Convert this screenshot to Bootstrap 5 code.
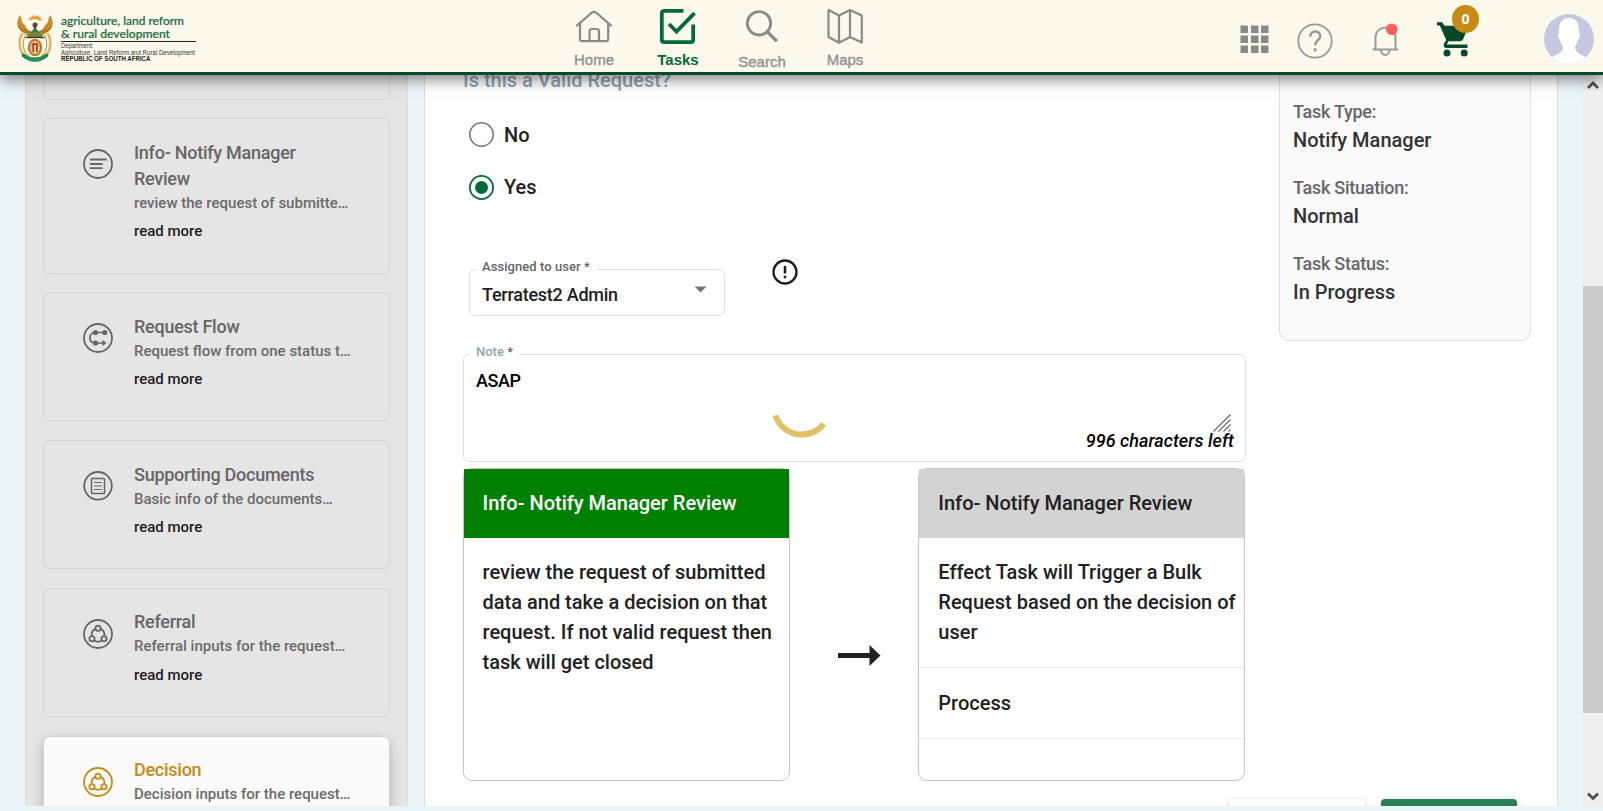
<!DOCTYPE html>
<html lang="en">
<head>
<meta charset="utf-8">
<meta name="viewport" content="width=device-width, initial-scale=1">
<title>Tasks</title>
<link href="https://cdn.jsdelivr.net/npm/bootstrap@5.3.0/dist/css/bootstrap.min.css" rel="stylesheet">
<script src="https://cdn.jsdelivr.net/npm/bootstrap@5.3.0/dist/js/bootstrap.bundle.min.js"></script>
<style>
body{font-family:Roboto,sans-serif;font-weight:500;color:#212121;background:#ebf4f8;height:811px;overflow:hidden}
svg{display:block;flex:none}
.topbar{height:75px;background:#fbf9eb;border-bottom:3px solid #044c29;box-shadow:0 4px 14px rgba(0,0,0,.5);z-index:5;padding-left:16px}
.brand-box{width:536px}
.nav-tab{font-family:"Liberation Sans",sans-serif;font-size:15px;line-height:18px;color:#929292;font-weight:400;-webkit-text-stroke:.4px #929292;width:84px;padding-top:8px}
.nav-tab.on{color:#036b38;font-weight:700;-webkit-text-stroke:0;font-size:15px}
.tools{margin-left:auto;width:363px}
.count{left:16px;top:-17px;width:27px;height:28px;background:#c58b14;color:#fff;font:700 14px/27px "Open Sans",sans-serif}
.stage{height:731px;padding-left:25px}
.side{width:383px;background:#e5e5e5;border:solid #e0e0e0;border-width:0 2px;padding:0 16px;margin-right:16px}
.step{border:1px solid #d2d2d2;border-radius:7px;height:129px;margin-bottom:19px;padding:21px 20px 0 39px;gap:21px;flex:none}
.step.cut{height:25px;border-top:0;border-radius:0 0 7px 7px;margin-bottom:18px}
.step.tall{height:156px;margin-bottom:18px}
.step.up{padding-top:20px}
.step.on{background:#fafafa;box-shadow:0 4px 12px rgba(0,0,0,.22);color:#c58b14}
.step>svg{margin-top:9px;color:#666}
.step.up>svg{margin-top:10px}
.step.on>svg{color:#c58b14}
.step h6{font-size:18px;line-height:26px;margin:0;color:#666;font-weight:500;letter-spacing:-.26px}
.step.on h6{color:#c58b14}
.step p{font-size:15px;line-height:22px;margin:0 0 6px;color:#6b6b6b;white-space:nowrap}
.step a{font-size:15px;line-height:22px;color:#212121;text-decoration:none;display:block}
.page{width:1134px;background:#fff;border:solid #d9dde0;border-width:0 1px;margin-right:25px}
.form-col{width:783px;margin-left:38px;margin-right:33px}
.question{margin-top:-7px;font-size:20px;line-height:24px;color:#90a4ae}
.choice{height:25px;font-size:20px;line-height:25px;gap:10px;padding-left:6px}
.outlined{border:1px solid #e0e0e0;border-radius:6px}
.legend-tag{font-size:13px;line-height:16px;background:#fff;padding:0 6px;top:-11px;color:#666;white-space:nowrap}
.user{width:256px;height:47px;padding:8px 17px 0 12px;font-size:18px;line-height:24px}
.note{height:108px;margin-top:38px;font-size:18px;color:#000}
.flow-box{width:327px;border:1px solid #c4c4c4;border-radius:9px;font-size:20px;line-height:30px}
.flow-box header{height:69px;padding:19px 18px 0 18.5px}
.flow-box section{padding:19px 6px 0 18.5px}
.flow-box .rule{border-bottom:1px solid #ebebeb}
.flow-box.next header,.flow-box.next section{padding-left:19.3px}
.flow-box.next section{padding-right:5px}
.info{width:252px;height:266px;background:#fafafa;border:1px solid #e0e0e0;border-top:0;border-radius:0 0 10px 10px;padding:24px 13px}
.info dt{font-size:18px;line-height:25px;font-weight:500;color:#666;letter-spacing:-.26px}
.info dd{font-size:20px;line-height:30px;margin:1px 0 20px;color:#333}
.act{width:136px;height:42px;border-radius:4px;box-shadow:0 1px 5px rgba(0,0,0,.22)}
.rail{width:20px;background:#efefef;padding-top:5px}
.thumb{height:427px;background:#cbcbcb}
.loader{left:770px;top:375px}
</style>
</head>
<body class="d-flex flex-column">
<svg width="0" height="0" class="position-absolute">
  <symbol id="share" viewBox="0 0 30 30"><g fill="none" stroke="currentColor" stroke-width="1.8"><circle cx="15" cy="15" r="14"/><circle cx="15" cy="9.300" r="2.600"/><circle cx="9" cy="19.700" r="2.600"/><circle cx="21" cy="19.700" r="2.600"/><path d="M12.400 9.800C9.500 11 8.300 13.500 8.500 16.800M17.600 9.800C20.500 11 21.700 13.500 21.500 16.800M11.200 21.600C13.500 23.100 16.500 23.100 18.800 21.600"/></g></symbol>
</svg>
<header class="topbar d-flex position-relative flex-shrink-0">
  <div class="brand-box">
    <svg width="184" height="66" viewBox="16 0 184 66">
      <g fill="none" stroke-linecap="round">
        <path d="M22 34C17 42 20 56 29 59M48 34C53 42 50 56 41 59" stroke="#d9b96a" stroke-width="2.600"/>
        <path d="M25.500 35C21.500 43 23 52 28.500 56M44.500 35C48.500 43 47 52 41.500 56" stroke="#c6a04a" stroke-width="1.200"/>
      </g>
      <path d="M30 20.500L27.800 18.500L30.600 18.700L29.600 16L32 17.400L32.600 14.800L34.200 17L35.400 14.600L36.500 17L38.600 15L38.700 17.600L41.200 16.500L40 19L42.500 19L40.200 21Q35 17.500 30 20.500Z" fill="#f2962c"/>
      <path d="M20.500 15C16 20 16.500 27 21 31C25 34.500 30 35 33 31.500C28.500 31 25.500 28.500 25 25C21.500 23 20 19 20.500 15ZM49.500 15C54 20 53.500 27 49 31C45 34.500 40 35 37 31.500C41.500 31 44.500 28.500 45 25C48.500 23 50 19 49.500 15Z" fill="#b67a1b"/>
      <path d="M19 19Q18.500 26 24 29M21 17.500Q21 24 26 27.500M51 19Q51.500 26 46 29M49 17.500Q49 24 44 27.500" fill="none" stroke="#dba63d" stroke-width="1.100"/>
      <path d="M35 22.500Q38 22.500 37.500 25.500L35 30.500L32.500 25.500Q32.500 22.500 35 22.500Z" fill="#713f18"/>
      <path d="M35 27L39.500 33.200H30.500Z" fill="#16834d"/>
      <path d="M26.500 34.500L35 31.500L43.500 34.500L42 37H28Z" fill="#75813f"/>
      <path d="M25.500 37.500H44.500" stroke="#4a3a25" stroke-width="1.400"/>
      <ellipse cx="35" cy="47.500" rx="7.200" ry="8.700" fill="#b77c32"/>
      <ellipse cx="35" cy="47.500" rx="5" ry="6.600" fill="#e9c58a"/>
      <path d="M33.200 43V52M36.800 43V52M31.800 45.500L35 44L38.200 45.500" stroke="#a03323" stroke-width="1.500" fill="none"/>
      <path d="M23 53Q35 62 47 53L48.500 56Q35 67.500 21.500 56Z" fill="#15814b"/>
      <path d="M25.500 56.500Q35 63 44.500 56.500" stroke="#b9d7a5" stroke-width=".8" stroke-dasharray="1 1" fill="none"/>
      <g font-family="Lato, sans-serif" fill="#1c6b3c" stroke="#1c6b3c" stroke-width=".2" font-size="12.200" font-weight="500">
        <text x="61" y="25" textLength="123" lengthAdjust="spacingAndGlyphs">agriculture, land reform</text>
        <text x="61" y="37.500" textLength="109" lengthAdjust="spacingAndGlyphs">&amp; rural development</text>
      </g>
      <path d="M61 41.500H196" stroke="#222" stroke-width="1"/>
      <g font-family="Liberation Sans, sans-serif" fill="#333" font-size="6.300" font-weight="400">
        <text x="61" y="48.300" textLength="32.500" lengthAdjust="spacingAndGlyphs">Department:</text>
        <text x="61" y="54.800" textLength="134" lengthAdjust="spacingAndGlyphs">Agriculture, Land Reform and Rural Development</text>
        <text x="61" y="61.300" font-weight="700" fill="#222" textLength="89.500" lengthAdjust="spacingAndGlyphs">REPUBLIC OF SOUTH AFRICA</text>
      </g>
    </svg>
  </div>
  <nav class="d-flex">
    <div class="nav-tab d-flex flex-column align-items-center">
      <svg width="38" height="43" viewBox="575 8 38 43" fill="none" stroke="#8a8a8a" stroke-width="2.200" stroke-linecap="round" stroke-linejoin="round"><path d="M577 25.500L591.500 12.800Q594 11 596.500 12.800L611 25.500M580 23.500V39Q580 41.200 582 41.200H606Q608.200 41.200 608.200 39V23.500M589.500 41V31.500Q589.500 29 592 29H596.500Q599 29 599 31.500V41"/></svg>
      <span>Home</span>
    </div>
    <div class="nav-tab on d-flex flex-column align-items-center">
      <svg width="38" height="43" viewBox="659 8 38 43" fill="none" stroke="#036b38" stroke-width="3.800"><path d="M683.500 10.800H664.500Q661.800 10.800 661.800 13.500V39.500Q661.800 42.200 664.500 42.200H690.500Q693.200 42.200 693.200 39.500V24.500M669 24L676.500 31.500L694.500 13.200"/></svg>
      <span>Tasks</span>
    </div>
    <div class="nav-tab d-flex flex-column align-items-center">
      <svg width="38" height="45" viewBox="743 8 38 45" fill="none" stroke="#8a8a8a"><circle cx="759" cy="23.300" r="11.700" stroke-width="2.800"/><path d="M767.500 32L776.800 41.200" stroke-width="3.200"/></svg>
      <span>Search</span>
    </div>
    <div class="nav-tab d-flex flex-column align-items-center" style="width:82px">
      <svg width="38" height="43" viewBox="826 8 38 43" fill="none" stroke="#8a8a8a" stroke-width="2.200" stroke-linejoin="round"><path d="M828.500 10L839 15.500L850 10L861.800 15.500V42.500L850 37L839 42.800L828.500 37ZM839 15.500V42.500M850 10V37"/></svg>
      <span>Maps</span>
    </div>
  </nav>
  <div class="tools d-flex align-items-start">
    <svg width="29" height="29" viewBox="0 0 29 29" fill="#898989" style="margin-top:25px"><path d="M.5.500h7.500v7.500h-7.500zM11 .5h7.500v7.500h-7.500zM21 .5h7.500v7.500h-7.500zM.5 10.500h7.500v7.500h-7.500zM11 10.500h7.500v7.500h-7.500zM21 10.500h7.500v7.500h-7.500zM.5 20.500h7.500v7.500h-7.500zM11 20.500h7.500v7.500h-7.500zM21 20.500h7.500v7.500h-7.500z"/></svg>
    <svg width="36" height="36" viewBox="0 0 36 36" style="margin:23px 0 0 28px" fill="none" stroke="#999" stroke-width="1.800"><circle cx="18" cy="18" r="16.700"/><path d="M13.200 13.700C13.200 6.800 23.300 7 23.300 13.300C23.300 17.200 18.200 17 18.200 22.300" stroke-width="2.400"/><circle cx="18.200" cy="26.800" r=".8" fill="#999"/></svg>
    <svg width="28" height="34" viewBox="0 0 28 34" style="margin:23px 0 0 38px" fill="none" stroke="#999" stroke-width="2"><path d="M1.500 26.500H27M4.500 26V15C4.500 1 24.500 1 24.500 15V26M10 27C10 33.500 18.500 33.500 18.500 27"/><circle cx="20.800" cy="6.300" r="5.800" fill="#ff5c5c" stroke="none"/></svg>
    <div class="position-relative" style="margin:22px 0 0 37px">
      <svg width="34" height="36" viewBox="0 0 34 36" fill="#06492a"><path d="M1 0.200H6.200L8.500 3.800H31.500Q32.500 4.500 31.800 6L27 17.500Q26 19.300 24 19.300H12.500L10.800 22.500H31.500V26H10Q6.800 25.500 8 21.500L10.200 18L3.800 3.600H1Z"/><circle cx="11" cy="31" r="3.500"/><circle cx="28.200" cy="31" r="3.500"/></svg>
      <span class="count rounded-circle position-absolute text-center">0</span>
    </div>
    <svg width="50" height="50" viewBox="0 0 50 50" style="margin:14px 0 0 74px"><circle cx="25" cy="25" r="25" fill="#c4c8e0"/><path d="M25 4C32 4 35.500 8.500 35 19C36.500 19 36.500 24 34 25.500C33.500 29 32 31 31 33C31 39 37 40 42 43.500Q35 50 25 50T8 43.500C13 40 19 39 19 33C18 31 16.500 29 16 25.500C13.500 24 13.500 19 15 19C14.500 8.500 18 4 25 4Z" fill="#fff"/></svg>
  </div>
</header>

<main class="stage d-flex flex-shrink-0 overflow-hidden position-relative">
  <aside class="side d-flex flex-column overflow-hidden flex-shrink-0">
    <div class="step cut"></div>
    <div class="step tall d-flex">
      <svg width="30" height="30" viewBox="0 0 30 30" fill="none" stroke="currentColor" stroke-width="1.800"><circle cx="15" cy="15" r="14"/><path d="M7.500 10.500H23M7.500 15H19M7.500 19.200H19" stroke-linecap="round"/></svg>
      <div><h6>Info- Notify Manager<br>Review</h6><p>review the request of submitte…</p><a href="#">read more</a></div>
    </div>
    <div class="step d-flex">
      <svg width="30" height="30" viewBox="0 0 30 30" fill="none" stroke="currentColor" stroke-width="1.800"><circle cx="15" cy="15" r="14"/><path d="M22 9.500H12C5.500 10 5 19.500 12 20H21" stroke-width="1.700"/><g fill="currentColor" stroke="none"><circle cx="12.500" cy="9.500" r="2.600"/><circle cx="21.800" cy="9.500" r="2.600"/><circle cx="12.500" cy="20" r="2.600"/><path d="M19.500 16.800L23.500 20L19.500 23.200Z"/></g></svg>
      <div><h6>Request Flow</h6><p>Request flow from one status t…</p><a href="#">read more</a></div>
    </div>
    <div class="step d-flex">
      <svg width="30" height="30" viewBox="0 0 30 30" fill="none" stroke="currentColor" stroke-width="1.800"><circle cx="15" cy="14.800" r="13.800"/><rect x="8.500" y="7.500" width="13" height="15" rx=".8" stroke-width="1.500"/><path d="M11 11.500H19M11 15H19M11 18.500H19" stroke-width="1.100"/></svg>
      <div><h6>Supporting Documents</h6><p>Basic info of the documents…</p><a href="#">read more</a></div>
    </div>
    <div class="step up d-flex">
      <svg width="30" height="30"><use href="#share"/></svg>
      <div><h6>Referral</h6><p style="margin-bottom:7px">Referral inputs for the request…</p><a href="#">read more</a></div>
    </div>
    <div class="step up on d-flex">
      <svg width="30" height="30"><use href="#share"/></svg>
      <div><h6>Decision</h6><p>Decision inputs for the request…</p></div>
    </div>
  </aside>

  <section class="page flex-shrink-0">
    <div class="d-flex align-items-start">
      <div class="form-col">
        <div class="question">Is this a Valid Request?</div>
        <div class="choice d-flex" style="margin-top:30px"><svg width="25" height="25"><circle cx="12.500" cy="12.500" r="11.700" fill="none" stroke="#757575" stroke-width="1.600"/></svg><span style="padding-top:1px">No</span></div>
        <div class="choice d-flex" style="margin-top:28px"><svg width="25" height="25"><circle cx="12.500" cy="12.500" r="11.600" fill="none" stroke="#036b38" stroke-width="1.800"/><circle cx="12.500" cy="12.500" r="6.500" fill="#036b38"/></svg>Yes</div>
        <div class="d-flex align-items-start" style="margin:69px 0 0 6px">
          <div class="outlined user position-relative d-flex justify-content-between">
            <span class="legend-tag position-absolute" style="left:6px;letter-spacing:.06px">Assigned to user *</span>
            <span class="pt-1 mt-1 lh-1" style="letter-spacing:-.25px">Terratest2 Admin</span>
            <svg width="13" height="7" style="margin-top:8px"><path d="M.500 .5H12.500L6.500 6.500Z" fill="#757575"/></svg>
          </div>
          <svg width="26" height="26" viewBox="0 0 26 26" style="margin:-10px 0 0 46.500px" fill="none" stroke="#1d1d1d" stroke-width="2.300"><circle cx="13" cy="13" r="11.500"/><path d="M13 7V14.500M13 16.800V19.300" stroke-width="2.500"/></svg>
        </div>
        <div class="outlined note position-relative d-flex flex-column">
          <span class="legend-tag position-absolute" style="left:6px"><span style="color:#90a4ae">Note</span> *</span>
          <div style="padding:14px 12px 0;line-height:24px;letter-spacing:-.4px">ASAP</div>
          <div class="mt-auto d-flex flex-column align-items-end" style="padding:0 11px 9px">
            <svg width="18" height="18" style="margin:0 3px -2px 0" stroke="#6b6b6b" stroke-width="1.300"><path d="M.500 17.500L17.500 .5M5.500 17.500L17.500 5.500M10.500 17.500L17.500 10.500M15.500 17.500L17.500 15.500"/></svg>
            <em style="line-height:22px;letter-spacing:.05px">996 characters left</em>
          </div>
        </div>
        <div class="d-flex justify-content-between align-items-stretch" style="height:313px;margin:6px 1px 0 0">
          <div class="flow-box"><header class="text-white" style="background:#008000">Info- Notify Manager Review</header><section>review the request of submitted data and take a decision on that request. If not valid request then task will get closed</section></div>
          <svg width="43" height="22" viewBox="0 0 43 22" style="margin:177px 0 0 10px" fill="#212121"><path d="M0 8H31.500V0L42.500 10.500L31.500 21V13H0Z"/></svg>
          <div class="flow-box next"><header style="background:#d3d3d3">Info- Notify Manager Review</header><section class="rule" style="height:130px">Effect Task will Trigger a Bulk Request based on the decision of user</section><section class="rule" style="height:71px;padding-top:20px">Process</section></div>
        </div>
      </div>
      <dl class="info mb-0">
        <dt>Task Type:</dt><dd>Notify Manager</dd>
        <dt>Task Situation:</dt><dd>Normal</dd>
        <dt>Task Status:</dt><dd>In Progress</dd>
      </dl>
    </div>
    <div class="d-flex justify-content-end gap-3" style="padding-right:40px;margin-top:18px">
      <div class="act bg-white"></div><div class="act" style="background:#258151"></div>
    </div>
  </section>

  <div class="rail flex-shrink-0 d-flex flex-column align-items-center">
    <svg width="12" height="10" fill="none" stroke="#505050" stroke-width="2.800"><path d="M1 8L6 3L11 8"/></svg>
    <div class="thumb w-100" style="margin-top:196px"></div>
    <svg width="12" height="10" class="mt-auto mb-1" fill="none" stroke="#505050" stroke-width="2.800"><path d="M1 1.500L6 6.500L11 1.500"/></svg>
  </div>
</main>
<svg class="loader position-absolute" width="64" height="64" viewBox="770 375 64 64" fill="none"><path d="M775.500 415.300A27.500 27.500 0 0 0 823.600 423.800" stroke="#dfc268" stroke-width="6.200"/></svg>
</body>
</html>
